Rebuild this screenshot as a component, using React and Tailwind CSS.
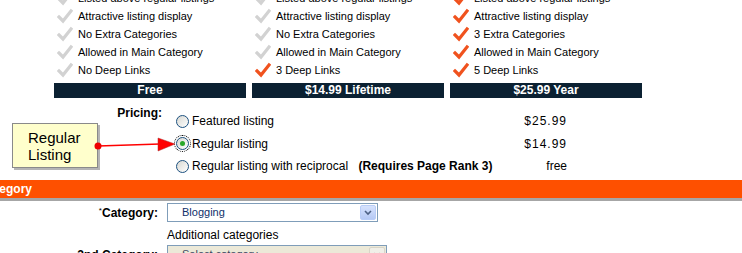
import React from "react";

const font = { fontFamily: '"Liberation Sans", Arial, sans-serif' };

function Check({ on }) {
  const c = on ? "#f0521e" : "#d2d2d2";
  return (
    <svg width="16" height="16" viewBox="0 0 16 16" className="shrink-0">
      <path d="M2 9 L6 13 L14 3" fill="none" stroke={c} strokeWidth="3.2" strokeLinecap="square" strokeLinejoin="miter" />
    </svg>
  );
}

function Col({ items, price }) {
  return (
    <div className="w-[198px]">
      {items.map(([on, t], i) => (
        <div key={i} className="h-[18px] flex items-center pl-[3px]">
          <Check on={on} />
          <span className="ml-[5px] text-[11px] text-black leading-none">{t}</span>
        </div>
      ))}
      <div className="mt-[4px] h-[15px] w-[192px] bg-[#0b2132] text-white font-bold text-[12px] leading-[15px] text-center">
        {price}
      </div>
    </div>
  );
}

function Radio({ checked }) {
  return (
    <div className={"w-[13px] h-[13px] rounded-full border border-[#1c5180] bg-gradient-to-br from-[#d8d8d2] to-white flex items-center justify-center shrink-0 " + (checked ? "outline outline-1 outline-dotted outline-black outline-offset-[1px]" : "")}>
      {checked && <div className="w-[5px] h-[5px] rounded-full bg-[#2aa82a]" />}
    </div>
  );
}

function Select({ text, disabled, width }) {
  return (
    <div className={"h-[19px] border border-[#7f9db9] flex items-center justify-between " + width + " " + (disabled ? "bg-[#ece9d8]" : "bg-white")}>
      <span className={"pl-[14px] text-[11px] " + (disabled ? "text-[#3a4660]" : "text-[#10306a]")}>{text}</span>
      <div className={"w-[16px] h-[15px] mr-[1px] rounded-[2px] border flex items-center justify-center " + (disabled ? "border-[#d8d5c8] bg-[#f0efe8]" : "border-[#b9cdf7] bg-gradient-to-b from-[#d6e2fd] to-[#b5c9f5]")}>
        <svg width="8" height="6" viewBox="0 0 8 6">
          <path d="M1 1 L4 4 L7 1" fill="none" stroke={disabled ? "#c8c6bd" : "#4d6185"} strokeWidth="1.6" />
        </svg>
      </div>
    </div>
  );
}

export default function App() {
  const cols = [
    {
      price: "Free",
      items: [
        [false, "Listed above regular listings"],
        [false, "Attractive listing display"],
        [false, "No Extra Categories"],
        [false, "Allowed in Main Category"],
        [false, "No Deep Links"],
      ],
    },
    {
      price: "$14.99 Lifetime",
      items: [
        [false, "Listed above regular listings"],
        [false, "Attractive listing display"],
        [false, "No Extra Categories"],
        [false, "Allowed in Main Category"],
        [true, "3 Deep Links"],
      ],
    },
    {
      price: "$25.99 Year",
      items: [
        [true, "Listed above regular listings"],
        [true, "Attractive listing display"],
        [true, "3 Extra Categories"],
        [true, "Allowed in Main Category"],
        [true, "5 Deep Links"],
      ],
    },
  ];
  return (
    <div className="relative w-[742px] h-[253px] overflow-hidden bg-white" style={font}>
      <div className="-mt-[11px] pl-[54px] flex">
        {cols.map((c, i) => (
          <Col key={i} items={c.items} price={c.price} />
        ))}
      </div>

      <div className="flex h-[82px]">
        <div className="w-[162px] text-right pt-[8px] text-[12px] leading-[14px] font-bold text-black">Pricing:</div>
        <div className="ml-[14px] pt-[12px] w-[391px] text-[12px] text-black">
          <div className="h-[22px] flex items-center">
            <Radio />
            <span className="ml-[3px] flex-1">Featured listing</span>
            <span className="tracking-[1px]">$25.99</span>
          </div>
          <div className="h-[23px] flex items-center">
            <Radio checked />
            <span className="ml-[3px] flex-1">Regular listing</span>
            <span className="tracking-[1px]">$14.99</span>
          </div>
          <div className="h-[22px] flex items-center">
            <Radio />
            <span className="ml-[3px] flex-1 whitespace-pre">
              Regular listing with reciprocal <b className="ml-[7px]">(Requires Page Rank 3)</b>
            </span>
            <span>free</span>
          </div>
        </div>
      </div>

      <div className="h-[21px] bg-[#fe5000] border-b-[3px] border-[#a6a6a6] flex items-center">
        <span className="-ml-[20px] text-white font-bold text-[12px]">Category</span>
      </div>

      <div className="flex items-center mt-[2px]">
        <div className="w-[158px] text-right text-[12px] font-bold text-black">
          <sup className="text-[8px] font-normal">*</sup>Category:
        </div>
        <div className="ml-[9px]">
          <Select text="Blogging" width="w-[211px]" />
        </div>
      </div>
      <div className="pl-[167px] mt-[4px] h-[18px] text-[12px] text-black leading-[18px]">Additional categories</div>
      <div className="flex items-start mt-[1px]">
        <div className="w-[158px] text-right text-[12px] font-bold text-black pt-[1px]">2nd Category:</div>
        <div className="ml-[9px]">
          <Select text="Select category" disabled width="w-[220px]" />
        </div>
      </div>

      {/* callout annotation */}
      <div className="absolute left-[12px] top-[123px] w-[86px] h-[45px] bg-[#ffffcc] border border-[#8a8a8a] shadow-[2px_2px_0_#b5b5b5] pl-[15px] pt-[5px] text-[15px] leading-[17px] text-black">
        Regular
        <br />
        Listing
      </div>
      <svg className="absolute left-0 top-0" width="200" height="180" viewBox="0 0 200 180">
        <line x1="98" y1="146" x2="160" y2="144" stroke="#f00" strokeWidth="1.5" />
        <polygon points="158,138 175,144 158,151" fill="#f00" stroke="#a33" strokeWidth="0.5" />
        <circle cx="98" cy="146" r="3.5" fill="#e00" />
      </svg>
    </div>
  );
}
